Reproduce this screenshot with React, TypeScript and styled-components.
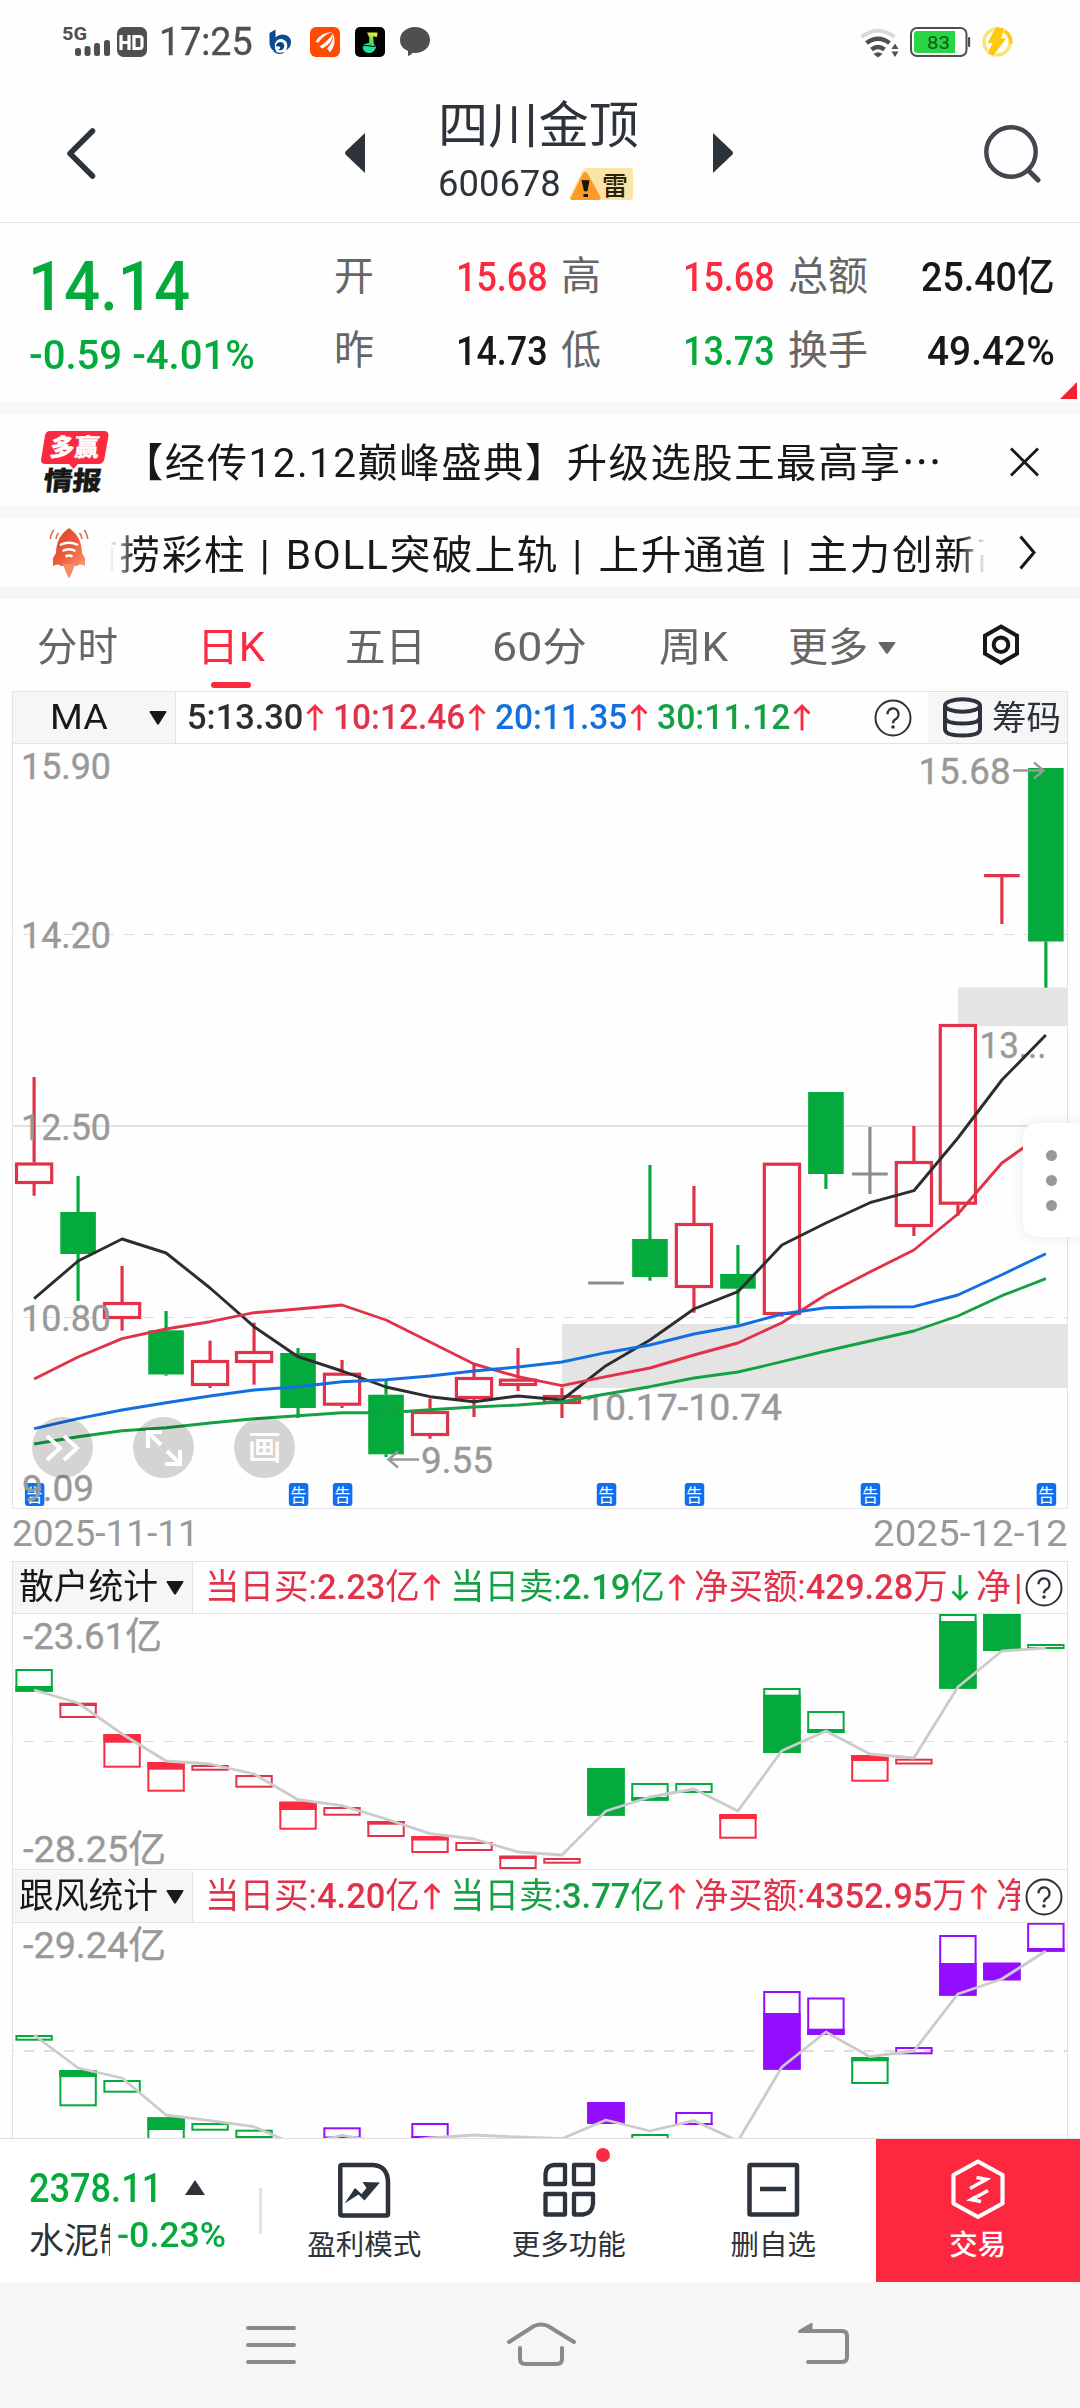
import React, { useLayoutEffect, useRef, useState } from 'react';
import styled, { createGlobalStyle } from 'styled-components';

const RED = '#fb2a40';
const LINE_RED = '#e23249';
const GREEN = '#05aa3d';
const BLUE = '#136fe0';
const PURPLE = '#930dff';
const INK = '#2d333b';
const GREY = '#999999';
const RULE = '#e3e3e3';
const BAND = '#f6f6f6';

const Global = createGlobalStyle`
  * { box-sizing: border-box; }
  body { margin: 0; background: #fff; }
  svg { display: block; flex: none; }
  svg text { font-family: Roboto, "Noto Sans CJK SC", sans-serif; }
`;

const Screen = styled.div`
  width: 1080px;
  height: 2408px;
  display: flex;
  flex-direction: column;
  overflow: hidden;
  background: #fefefe;
  color: #181818;
  font-family: Roboto, 'Noto Sans CJK SC', sans-serif;
  white-space: nowrap;
`;

/* ---------- text squeezed or stretched to a fixed measure ---------- */
const FitBox = styled.span<{ $w: number }>`
  display: inline-block;
  flex: none;
  width: ${(p) => p.$w}px;
`;
const FitInner = styled.span`
  display: inline-block;
  white-space: pre;
  transform-origin: 0 50%;
`;
function Fit({ w, children }: { w: number; children: React.ReactNode }) {
  const ref = useRef<HTMLSpanElement>(null);
  const [k, setK] = useState(1);
  useLayoutEffect(() => {
    if (ref.current) setK(w / ref.current.offsetWidth);
  }, [w]);
  return (
    <FitBox $w={w}>
      <FitInner ref={ref} style={{ transform: `scaleX(${k})` }}>{children}</FitInner>
    </FitBox>
  );
}

/* ---------- status bar ---------- */
const StatusBar = styled.div`
  height: 84px;
  flex: none;
  display: flex;
  align-items: center;
  padding: 0 67px 0 62px;
`;
const Clock = styled.div`
  margin: 0 15px 0 11px;
  font-size: 38px;
  line-height: 44px;
  color: #4f4f4f;
  -webkit-text-stroke: 0.4px #4f4f4f;
`;
const AppIcons = styled.div`
  display: flex;
  align-items: center;
  gap: 15px;
  flex: 1;
`;

/* ---------- header ---------- */
const Header = styled.div`
  height: 139px;
  flex: none;
  display: flex;
  align-items: center;
  justify-content: space-between;
  padding: 0 39px 0 66px;
  border-bottom: 1px solid ${RULE};
`;
const TitleGroup = styled.div`
  display: flex;
  align-items: center;
  gap: 72px;
  margin-left: -3px;
`;
const Title = styled.div`
  width: 202px;
  display: flex;
  flex-direction: column;
  color: ${INK};
`;
const StockName = styled.div`
  font-size: 50px;
  line-height: 58px;
  margin-top: -6px;
`;
const CodeRow = styled.div`
  display: flex;
  align-items: center;
  gap: 8px;
  font-size: 37px;
  line-height: 38px;
  margin-top: 10px;
`;

/* ---------- quote ---------- */
const Quote = styled.div`
  height: 179px;
  flex: none;
  display: flex;
  padding: 17px 25px 0 28px;
  position: relative;
`;
const PriceBlock = styled.div`
  width: 306px;
  color: ${GREEN};
`;
const Price = styled.div`
  font-size: 69px;
  font-weight: 500;
  line-height: 94px;
`;
const Change = styled.div`
  font-size: 41px;
  font-weight: 500;
  line-height: 42px;
  padding-left: 1px;
`;
const Stats = styled.div`
  flex: 1;
  display: grid;
  grid-template-columns: 42px 172px 55px 172px 95px 1fr;
  grid-auto-rows: 74px;
  align-items: center;
`;
const StatLabel = styled.div<{ $pad?: boolean }>`
  padding-left: ${(p) => (p.$pad ? 13 : 0)}px;
  font-size: 40px;
  line-height: 48px;
  color: #666;
`;
const StatValue = styled.div<{ $c?: string }>`
  text-align: right;
  font-size: 41px;
  font-weight: 500;
  line-height: 48px;
  color: ${(p) => p.$c || '#181818'};
`;
const Corner = styled.div`
  position: absolute;
  right: 3px;
  bottom: 3px;
  border-left: 17px solid transparent;
  border-bottom: 17px solid #f4222f;
`;

const Band = styled.div`
  height: 12px;
  flex: none;
  background: ${BAND};
`;

/* ---------- notices ---------- */
const News = styled.div`
  height: 92px;
  flex: none;
  display: flex;
  align-items: center;
  justify-content: space-between;
  padding: 3px 41px 0 41px;
`;
const NewsText = styled.div`
  flex: 1;
  margin-left: 14px;
  font-size: 40px;
  line-height: 48px;
  letter-spacing: 1.5px;
`;
const Dots = styled.span`
  font-family: 'Noto Sans CJK SC', sans-serif;
`;
const Ticker = styled.div`
  height: 69px;
  flex: none;
  display: flex;
  align-items: center;
  padding: 0 44px 0 48px;
  justify-content: space-between;
`;
const TickerView = styled.div`
  width: 876px;
  height: 60px;
  margin: 6px 34px 0 19px;
  overflow: hidden;
  font-size: 40px;
  line-height: 60px;
  letter-spacing: 1.7px;
  mask-image: linear-gradient(90deg, transparent 0, #000 24px, #000 850px, transparent 876px);
`;
const TickerRun = styled.div`
  margin-left: -33px;
`;
const Wide = styled.span`
  letter-spacing: 3px;
`;

/* ---------- period tabs ---------- */
const Tabs = styled.div`
  height: 92px;
  flex: none;
  display: flex;
`;
const Tab = styled.div<{ $on?: boolean; $pull?: number }>`
  width: 154px;
  display: flex;
  flex-direction: column;
  align-items: center;
  padding: 24px ${(p) => p.$pull || 0}px 0 0;
  font-size: 40px;
  line-height: 50px;
  color: ${(p) => (p.$on ? RED : '#666')};
`;
const TabLine = styled.span`
  display: flex;
  align-items: center;
  gap: 10px;
`;
const TabMark = styled.span`
  width: 40px;
  height: 6px;
  margin-top: 9px;
  border-radius: 3px;
  background: ${RED};
`;
const TabTool = styled.div`
  flex: 1;
  display: flex;
  padding: 24px 0 0 58px;
`;

/* ---------- chart panels ---------- */
const Panel = styled.div<{ $h: number }>`
  width: 1056px;
  height: ${(p) => p.$h}px;
  margin-left: 12px;
  flex: none;
  overflow: hidden;
  border: 1px solid ${RULE};
  border-bottom: 0;
`;
const PanelHead = styled.div<{ $tall?: boolean }>`
  height: ${(p) => (p.$tall ? 53 : 52)}px;
  padding-top: ${(p) => (p.$tall ? 1 : 0)}px;
  display: flex;
  align-items: center;
  border-bottom: 1px solid ${RULE};
  font-size: 35px;
  line-height: 50px;
`;
const Picker = styled.div<{ $w: number; $l: number }>`
  width: ${(p) => p.$w}px;
  height: 51px;
  flex: none;
  display: flex;
  align-items: center;
  justify-content: space-between;
  padding: 0 8px 0 ${(p) => p.$l}px;
  background: ${BAND};
  border-right: 1px solid ${RULE};
`;
const Readout = styled.div<{ $l: number; $w: number }>`
  margin-left: ${(p) => p.$l}px;
  width: ${(p) => p.$w}px;
  height: 50px;
  flex: none;
  display: flex;
  align-items: center;
  overflow: hidden;
`;
const Item = styled.span<{ $c: string; $gap: number; $bold?: boolean }>`
  display: flex;
  align-items: center;
  gap: 3px;
  flex: none;
  margin-right: ${(p) => p.$gap}px;
  color: ${(p) => p.$c};
  font-weight: ${(p) => (p.$bold ? 500 : 400)};
`;
const Strong = styled.span`
  font-weight: 500;
`;
const HelpSlot = styled.div<{ $l: number }>`
  margin-left: ${(p) => p.$l}px;
`;
const ChipButton = styled.div`
  width: 139px;
  height: 50px;
  margin-left: auto;
  display: flex;
  align-items: center;
  gap: 9px;
  padding-left: 14px;
  background: ${BAND};
  color: ${INK};
  font-size: 34px;
`;
const ChartArea = styled.div`
  position: relative;
  margin-left: -13px;
`;
const ChartWrap = styled.div`
  position: relative;
  flex: none;
`;
const RoundTools = styled.div`
  position: absolute;
  left: 32px;
  bottom: 30px;
  display: flex;
  gap: 40px;
`;
const RoundTool = styled.div`
  width: 61px;
  height: 61px;
  border-radius: 50%;
  display: flex;
  align-items: center;
  justify-content: center;
  background: rgba(0, 0, 0, 0.165);
  color: #fff;
  font-size: 34px;
  font-weight: 500;
  line-height: 60px;
`;
const SideHandle = styled.div`
  position: absolute;
  right: 0;
  top: 432px;
  width: 57px;
  height: 114px;
  border-radius: 14px 0 0 14px;
  background: #fff;
  box-shadow: 0 0 14px rgba(0, 0, 0, 0.09);
  display: flex;
  flex-direction: column;
  align-items: center;
  justify-content: center;
  gap: 14px;
`;
const HandleDot = styled.span`
  width: 11px;
  height: 11px;
  border-radius: 50%;
  background: #999;
`;
const Dates = styled.div`
  height: 53px;
  flex: none;
  display: flex;
  justify-content: space-between;
  padding: 0 12px 0 12px;
  border-top: 1px solid transparent;
  background: linear-gradient(${RULE}, ${RULE}) 12px 0 / 1056px 1px no-repeat border-box;
  font-size: 37px;
  line-height: 49px;
  color: ${GREY};
`;

/* ---------- bottom bar ---------- */
const BottomBar = styled.div`
  height: 144px;
  flex: none;
  display: flex;
  border-top: 1px solid #dedede;
  background: #fff;
`;
const IndexBox = styled.div`
  width: 262px;
  display: flex;
  align-items: center;
  justify-content: space-between;
`;
const IndexInfo = styled.div`
  padding-left: 29px;
  color: ${GREEN};
  font-weight: 500;
`;
const IndexRow = styled.div`
  height: 50px;
  display: flex;
  align-items: center;
  gap: 23px;
  font-size: 41px;
`;
const SectorRow = styled.div`
  height: 46px;
  display: flex;
  align-items: center;
  gap: 7px;
  font-size: 35px;
`;
const Sector = styled.span`
  width: 81px;
  overflow: hidden;
  color: ${INK};
  font-weight: 400;
  line-height: 46px;
  margin-top: 12px;
`;
const Divider = styled.div`
  width: 3px;
  height: 46px;
  background: #e4e4e4;
`;
const Action = styled.div<{ $hot?: boolean }>`
  flex: 1;
  display: flex;
  flex-direction: column;
  align-items: center;
  padding-top: 18px;
  background: ${(p) => (p.$hot ? '#fd273f' : 'transparent')};
  color: ${(p) => (p.$hot ? '#fff' : INK)};
  font-size: 28.5px;
  font-weight: ${(p) => (p.$hot ? 500 : 400)};
  line-height: 40px;
`;
const ActionIcon = styled.div`
  position: relative;
  margin-bottom: 23px;
  height: 46px;
`;
const RedDot = styled.span`
  position: absolute;
  left: 54px;
  top: -9px;
  width: 14px;
  height: 14px;
  border-radius: 50%;
  background: ${RED};
`;
const NavBar = styled.div`
  height: 126px;
  flex: none;
  display: grid;
  grid-template-columns: 262px 292px 56px;
  align-content: start;
  padding: 36px 0 0 243px;
  background: ${BAND};
`;

/* ---------- icons ---------- */
const Arrow = ({ c, down }: { c: string; down?: boolean }) => (
  <svg width="18" height="27" viewBox="0 0 18 27" fill="none" stroke={c} strokeWidth="2.8">
    {down ? <path d="M9 1v24M1.5 17.5 9 25l7.5-7.5" /> : <path d="M9 26.5V2M1.5 9.500 9 2l7.5 7.500" />}
  </svg>
);
const Caret = ({ w = 18, h = 14, c = '#181818' }: { w?: number; h?: number; c?: string }) => (
  <svg width={w} height={h} viewBox="0 0 18 14" preserveAspectRatio="none">
    <path d="M1.500 0h15q1.500 0 .7 1.400L10 13q-1 1.500-2 0L.8 1.400Q0 0 1.500 0Z" fill={c} />
  </svg>
);
const Help = () => (
  <svg width="38" height="38" viewBox="0 0 38 38" fill="none" stroke={INK} strokeWidth="2">
    <circle cx="19" cy="19" r="17.500" />
    <path d="M13.500 15.200a5.500 5.700 0 1 1 8 5c-1.800 1-2.500 2-2.500 4" strokeWidth="2.400" />
    <circle cx="19" cy="28" r="1.800" fill={INK} stroke="none" />
  </svg>
);
const Signal = () => (
  <svg width="51" height="38" viewBox="62 23 51 38" fill="#4f4f4f">
    <text x="62" y="39.500" fontSize="18.500" fontWeight="700" textLength="25" lengthAdjust="spacingAndGlyphs">5G</text>
    <rect x="75" y="48" width="6" height="8" rx="2.500" />
    <rect x="84.500" y="46" width="6" height="10" rx="2.500" />
    <rect x="94" y="43" width="6" height="13" rx="2.500" />
    <rect x="104" y="40" width="6" height="16" rx="2.500" />
  </svg>
);
const HdMark = styled.svg`
  margin-left: 4px;
`;
const Hd = () => (
  <HdMark width="31" height="30" viewBox="0 0 31 30">
    <rect width="30" height="30" rx="6.500" fill="#4f4f4f" />
    <path d="M4 8v15M12 8v15M4 15.500h8M17 9.500h5.500q2.500 0 2.500 2.500v7q0 2.500-2.500 2.500H17Z" fill="none" stroke="#fff" strokeWidth="3.200" />
  </HdMark>
);
const StatusApps = () => (
  <AppIcons>
    <svg width="27" height="30" viewBox="0 0 27 30">
      <path d="M1.500 6 7.500 2.500v8q2-2.700 6.500-3Q22.500 7.500 23 15q0 5.500-5 8.500 2-3.500 1-7-1.500-4.500-6.500-4.500-4.500.5-5.700 5.500-.5 4 2 8-7.300-3-7.300-9.500Z" fill="#0c4a93" />
      <path d="M8 19.500q0-4 4-4.500 4 0 4.300 4-.3 4-4 4.300-1.300 0-2-.8 2-.5 2-2.300-1.500-1.500-4.300-.7Z" fill="#0c3f86" />
      <path d="M6 24q4 4 9.500 1.500" stroke="#0c4a93" strokeWidth="1.200" fill="none" />
    </svg>
    <svg width="30" height="30" viewBox="0 0 30 30">
      <rect width="30" height="30" rx="6" fill="#fd4a04" />
      <g fill="#fff">
        <path d="M5.500 15Q10 5.500 22.500 5 12.500 8.500 8.500 15.500Z" />
        <path d="M9.500 19.500Q18.500 14 23 6q.5 9.500-10.500 15.500Z" />
        <path d="M17 21.500Q23 15.500 23.500 7q3.500 11-4 18.500-.3-2.700-2.500-4Z" />
      </g>
    </svg>
    <svg width="30" height="30" viewBox="0 0 30 30">
      <defs>
        <linearGradient id="note" x1="0.600" y1="0" x2="0.400" y2="1">
          <stop offset="0" stopColor="#f4e93a" />
          <stop offset=".5" stopColor="#2fe35c" />
          <stop offset="1" stopColor="#1fe0c8" />
        </linearGradient>
      </defs>
      <rect width="30" height="30" rx="5" fill="#020202" />
      <path d="M12 5.500h10.500l-.5 4.500-4-.5 1 8q3 1.500 1.500 4-2 4.500-6.500 4.500-6 0-6.500-6.500.5-3 6.500-3.500l.5-5Z" fill="url(#note)" />
      <path d="M6 19.500q5-2 9-.5t8-1" stroke="#020202" strokeWidth="1" fill="none" />
    </svg>
    <svg width="30" height="30" viewBox="0 0 30 30">
      <path d="M15 0c8.500 0 15 5.500 15 13S23.500 26 15 26c-.8 0-1.500 0-2.200-.2Q10.500 28.500 8 29V24Q0 20.500 0 13C0 5.500 6.500 0 15 0Z" fill="#4f4f4f" />
    </svg>
  </AppIcons>
);
const StatusRight = () => (
  <svg width="154" height="32" viewBox="861 26 154 32">
    <path d="M863.500 37q16.500-12.500 33 0" fill="none" stroke="#d9d9d9" strokeWidth="4" />
    <path d="M868.500 43q11.500-8.500 23 0M873.500 49.500q6.500-5 13 0" fill="none" stroke="#4f4f4f" strokeWidth="4.500" />
    <path d="M875.500 54q4.500-3.500 9 0l-4.500 3.500Z" fill="#4f4f4f" />
    <path d="m893.500 49 3.500-5.500 3.500 5.500ZM893.500 51.500l3.500 5.500 3.500-5.500Z" fill="#4f4f4f" />
    <rect x="913" y="28" width="55.500" height="28" rx="6" fill="#fff" stroke="#4f4f4f" strokeWidth="2" />
    <path d="M916 34q0-3 3-3h38v22h-38q-3 0-3-3Z" fill="#28d544" />
    <rect x="970" y="37" width="2.200" height="10" rx="1" fill="#4f4f4f" />
    <text x="929" y="48.500" fontSize="18.500" fill="#12581d" textLength="23" lengthAdjust="spacingAndGlyphs">83</text>
    <circle cx="999" cy="42" r="13" fill="none" stroke="#fde27a" strokeWidth="3.500" />
    <path d="M1003.500 29.500q10.500 4 9.500 14" fill="none" stroke="#fbc90d" strokeWidth="3" />
    <path d="M997.500 26.500 1007 28l-3.500 10h5.500l-9.500 12.500-4 6-6.500-3 5-10h-5Z" fill="#fbc90d" stroke="#fff" strokeWidth=".8" />
  </svg>
);
const RiskTag = () => (
  <svg width="65" height="33" viewBox="0 0 65 33">
    <path d="M14 2q1.500-2 4-2h43q3 0 3 3v26q0 3-3 3H3q-4 0-2-4Z" fill="#fbe5a6" />
    <path d="M16 4q2 0 3 2l12.500 23q.5 3-2.500 3H3.500Q.5 31.500 2 29L13.500 6q1-2 2.500-2Z" fill="#fd9a28" />
    <path d="m12.500 12 8 .2-2 11h-3.500ZM14.500 26h4.500v3h-4.500Z" fill="#1a1205" />
    <text x="33" y="26.500" fontSize="26" fontWeight="500" fill="#2b210c" textLength="26" lengthAdjust="spacingAndGlyphs">雷</text>
  </svg>
);
const NewsLogo = () => (
  <svg width="68" height="64" viewBox="0 0 68 64">
    <path d="M9 1h54q5 0 4.400 5l-4 23q-1 5-6 5H37l-4.500 5L28 34H4.500q-5 0-4.300-5L4 5.500Q4.800 1 9 1Z" fill={RED} />
    <g transform="skewX(-6)" fontWeight="900">
      <text x="11" y="26.500" fontSize="24.500" fill="#fff" stroke="#fff" strokeWidth=".3" textLength="49" lengthAdjust="spacingAndGlyphs">多赢</text>
      <text x="8" y="60.500" fontSize="26" fill="#181818" stroke="#181818" strokeWidth=".3" textLength="58" lengthAdjust="spacingAndGlyphs">情报</text>
    </g>
  </svg>
);
const Rocket = () => (
  <svg width="43" height="52" viewBox="48 526 43 52">
    <defs>
      <linearGradient id="hull" x1="0" y1="0" x2="1" y2="1">
        <stop offset="0" stopColor="#d8402c" />
        <stop offset=".55" stopColor="#ee5c3c" />
        <stop offset="1" stopColor="#fb9a6c" />
      </linearGradient>
    </defs>
    <path d="M69 527q13 9 13 25l3 5v8q-5-3-8 0H61q-3-3-8 0v-8l3-5q0-16 13-25Z" fill="url(#hull)" />
    <path d="M63 563h12l-3.500 9.500-2.500 5-2.500-5Z" fill="#f98a62" />
    <path d="M60 544q9-4.500 18 0M62.500 550q6.500-3.500 13 0M65.500 555.500q3.500-2 7 0" fill="none" stroke="#fff" strokeWidth="2.400" />
    <path d="M54 529q-3 3-3.800 9M58.500 532q-2 2-2.500 6M84 529q3 3 3.800 9M79.500 532q2 2 2.500 6" fill="none" stroke="#d8604a" strokeWidth="1.500" />
  </svg>
);
const HexNut = () => (
  <svg width="38" height="44" viewBox="0 0 38 44" fill="none" stroke="#181818">
    <path d="M19 3.500 35 12.700v18L19 40 3 30.700v-18Z" strokeWidth="4" />
    <circle cx="19" cy="21.700" r="7.300" strokeWidth="4" />
  </svg>
);
const Stack = () => (
  <svg width="41" height="41" viewBox="0 0 41 41" fill="none" stroke={INK} strokeWidth="4">
    <ellipse cx="20.500" cy="8.500" rx="17.500" ry="6.300" />
    <path d="M3 8.500V32q0 6.500 17.500 6.500T38 32V8.500M3 20q0 6.500 17.500 6.500T38 20" />
  </svg>
);

/* ---------- chart geometry ---------- */
const colX = (i: number) => 34.1 + 43.99 * i;
const toPoints = (ys: number[]) => ys.map((y, i) => `${colX(i)},${y}`).join(' ');

type Candle = [kind: 'r' | 'g' | 'n', high: number, top: number, bottom: number, low: number];
const candles: Candle[] = [
  ['r', 1077, 1162.5, 1184, 1195.7], ['g', 1176, 1212, 1254, 1301], ['r', 1266, 1302, 1319, 1330.7],
  ['g', 1311, 1330.3, 1374.5, 1375.7], ['r', 1340.7, 1360, 1386, 1388], ['r', 1322.7, 1351, 1363, 1384.7],
  ['g', 1348, 1353, 1408, 1418], ['r', 1360, 1372.7, 1405.7, 1408], ['g', 1380, 1394.7, 1454.3, 1457],
  ['r', 1398.7, 1411, 1436, 1438.7], ['r', 1364, 1377, 1399, 1417], ['r', 1348, 1378.7, 1386, 1391],
  ['r', 1387.7, 1395, 1404, 1418], ['n', 1283, 1283, 1283, 1283], ['g', 1165, 1239, 1277, 1280.7],
  ['r', 1186, 1223, 1288, 1312.7], ['g', 1245, 1274, 1288.7, 1324], ['r', 1163, 1162.7, 1315, 1316.7],
  ['g', 1092, 1092, 1174, 1189], ['n', 1127, 1174, 1174, 1194], ['r', 1126, 1161, 1227, 1236],
  ['r', 1025, 1024, 1204.7, 1215.7], ['r', 875, 875.7, 875.7, 924], ['g', 768, 768, 941.5, 987.7],
];
const ma5 = [1298.7, 1261, 1239, 1253, 1288, 1326.7, 1356.7, 1371, 1387, 1396.7, 1401.7, 1396, 1400, 1365.7, 1340, 1309, 1291.7, 1245, 1223, 1202.7, 1190.7, 1138, 1080, 1035];
const ma10 = [1379, 1357, 1338.7, 1329, 1321.7, 1312.7, 1309, 1305, 1320, 1342, 1364, 1376.7, 1385.7, 1376.7, 1368, 1355, 1343, 1322.7, 1294.7, 1272, 1250, 1214, 1163, 1132];
const ma20 = [1428.7, 1418.7, 1410, 1402.7, 1396, 1390, 1386.7, 1381.7, 1379.7, 1376, 1371, 1367, 1362, 1352.7, 1345, 1334, 1326, 1314, 1307.7, 1307, 1306.7, 1295, 1274.7, 1253.7];
const ma30 = [1444, 1436.7, 1430.7, 1427.7, 1423, 1418.7, 1415.7, 1412.7, 1412.7, 1409.7, 1407, 1405, 1401.7, 1394, 1386.7, 1378, 1372, 1361.7, 1351, 1341, 1331, 1316, 1295.7, 1278.7];

const CandleMark = ({ c, i }: { c: Candle; i: number }) => {
  const [kind, high, top, bottom, low] = c;
  const x = colX(i);
  const color = kind === 'r' ? LINE_RED : kind === 'g' ? GREEN : '#8c8c8c';
  const flat = top === bottom;
  return (
    <g stroke={color} strokeWidth="3.200" fill="none">
      {high < top && <line x1={x} x2={x} y1={high} y2={top} />}
      {low > bottom && <line x1={x} x2={x} y1={bottom} y2={low} />}
      {flat && <line x1={x - 17.8} x2={x + 17.8} y1={top} y2={top} />}
      {!flat && kind === 'r' && <rect x={x - 17.6} y={top + 1.5} width="35.200" height={bottom - top - 3} />}
      {!flat && kind === 'g' && <rect x={x - 17.8} y={top} width="35.600" height={bottom - top} fill={GREEN} stroke="none" />}
    </g>
  );
};

const Label = ({ x, y, w, children }: { x: number; y: number; w: number; children: string }) => (
  <text x={x} y={y} fontSize="37.500" fill={GREY} stroke={GREY} strokeWidth=".4" textLength={w} lengthAdjust="spacingAndGlyphs">{children}</text>
);
const Dash = ({ y, sw = 1 }: { y: number; sw?: number }) => (
  <line x1="13" x2="1067" y1={y} y2={y} stroke="#dedede" strokeWidth={sw} strokeDasharray="10 10" strokeDashoffset="9" />
);

const MainChart = () => (
  <svg width="1080" height="764" viewBox="0 744 1080 764">
    <Dash y={934.5} />
    <line x1="13" x2="1067" y1="1126" y2="1126" stroke={RULE} strokeWidth="2" />
    <Dash y={1317.5} />
    <rect x="958" y="987.500" width="109" height="38.500" fill="#e4e4e4" />
    <rect x="562" y="1324" width="505" height="64" fill="#e4e4e4" />
    {candles.map((c, i) => <CandleMark key={i} c={c} i={i} />)}
    <g fill="none" strokeWidth="2.900" strokeLinejoin="round">
      <Label x={584} y={1419.5} w={198}>10.17-10.74</Label>
      <Label x={979.5} y={1057.5} w={67}>13...</Label>
      <polyline points={toPoints(ma5)} stroke="#2b2d30" />
      <polyline points={toPoints(ma10)} stroke={LINE_RED} />
      <polyline points={toPoints(ma20)} stroke={BLUE} />
      <polyline points={toPoints(ma30)} stroke="#15a043" />
    </g>
    {[0, 6, 7, 13, 15, 19, 23].map((i) => (
      <g key={i}>
        <rect x={colX(i) - 9.2} y="1483" width="19.500" height="23" rx="3" fill="#0f6ff0" />
        <text x={colX(i) - 7.6} y="1501.500" fontSize="18" fill="#fff" textLength="16" lengthAdjust="spacingAndGlyphs">告</text>
      </g>
    ))}
    <Label x={21} y={779} w={90}>15.90</Label>
    <Label x={21} y={948} w={90}>14.20</Label>
    <Label x={21} y={1139.5} w={90}>12.50</Label>
    <Label x={21} y={1331} w={90}>10.80</Label>
    <Label x={22} y={1500.5} w={72}>9.09</Label>
    <Label x={918.5} y={783.7} w={92}>15.68</Label>
    <Label x={421} y={1472.7} w={72}>9.55</Label>
    <g fill="none" stroke={GREY} strokeWidth="2.400">
      <path d="M1013 770.500h30M1034 762.500l9.500 8-9.500 8" />
      <path d="M419 1459.500h-30M398 1451.500l-9.500 8 9.500 8" />
    </g>
  </svg>
);

/* colour, top, bottom, solid part from..to */
type Bar = [i: number, color: string, top: number, bottom: number, from?: number, to?: number];
const retail: Bar[] = [
  [0, GREEN, 1669, 1691.7, 1686, 1691.7], [1, LINE_RED, 1702.7, 1718, 1703, 1706], [2, RED, 1734, 1767.7, 1734, 1742.7],
  [3, RED, 1762, 1791.7, 1762, 1769.7], [4, LINE_RED, 1765, 1770.7], [5, LINE_RED, 1775, 1787.7],
  [6, RED, 1801.7, 1829.7, 1801.7, 1810], [7, LINE_RED, 1807, 1815.7], [8, LINE_RED, 1821, 1837, 1821, 1824.7],
  [9, RED, 1836, 1853, 1836, 1840.5], [10, LINE_RED, 1842, 1851], [11, LINE_RED, 1855.7, 1869, 1855.7, 1859],
  [12, LINE_RED, 1858, 1863.7], [13, GREEN, 1768, 1815.7, 1768, 1815.7], [14, GREEN, 1783, 1800.7, 1797, 1800.7],
  [15, GREEN, 1783, 1793], [16, RED, 1814, 1838.7, 1814, 1819], [17, GREEN, 1688, 1753, 1694.7, 1753],
  [18, GREEN, 1711, 1733, 1729, 1733], [19, RED, 1755, 1781.7, 1755, 1761], [20, LINE_RED, 1758.7, 1764.5],
  [21, GREEN, 1614, 1688.7, 1621, 1688.7], [22, GREEN, 1613, 1651, 1613, 1651], [23, GREEN, 1644, 1649],
];
const retailLine = [1690, 1703, 1734, 1761, 1764, 1774, 1799.7, 1805.7, 1819, 1833.7, 1839, 1852, 1855, 1811, 1797, 1789, 1811, 1750.7, 1731, 1754, 1758, 1687, 1651, 1648];
const follow: Bar[] = [
  [0, GREEN, 2035, 2040.7], [1, GREEN, 2070, 2106.3, 2070, 2077], [2, GREEN, 2080, 2092.7], [3, GREEN, 2117.3, 2152, 2117.3, 2130],
  [4, GREEN, 2123, 2130.7], [5, GREEN, 2129.7, 2138], [7, PURPLE, 2127.3, 2138.5], [9, PURPLE, 2123, 2141, 2136, 2141],
  [13, PURPLE, 2102, 2124, 2102, 2124], [14, GREEN, 2134, 2144], [15, PURPLE, 2112, 2125, 2123, 2125],
  [17, PURPLE, 1991, 2069.7, 2013, 2069.7], [18, PURPLE, 1997.5, 2035, 2028.7, 2035], [19, GREEN, 2057, 2084, 2057, 2061.3],
  [20, PURPLE, 2047, 2054.3], [21, PURPLE, 1935, 1995.7, 1963, 1995.7], [22, PURPLE, 1962.7, 1980.3, 1962.7, 1980.3],
  [23, PURPLE, 1922.7, 1951.7, 1948, 1951.7],
];
const followLine = [2035, 2068, 2078, 2115, 2120.7, 2126.7, 2146, 2135.3, 2143, 2138, 2135, 2137, 2138.7, 2120, 2131, 2120.7, 2141, 2067, 2032, 2056.7, 2051, 1994, 1979, 1951];

const BarMark = ({ b }: { b: Bar }) => {
  const [i, color, top, bottom, from, to] = b;
  const x = colX(i);
  return (
    <g>
      <rect x={x - 17.7} y={top + 1} width="35.400" height={bottom - top - 2} fill="none" stroke={color} strokeWidth="2" />
      {from !== undefined && to !== undefined && <rect x={x - 18.7} y={from} width="37.400" height={to - from} fill={color} />}
    </g>
  );
};
const Trend = ({ ys }: { ys: number[] }) => (
  <polyline points={toPoints(ys)} fill="none" stroke="#cbcbcb" strokeWidth="2.800" strokeLinejoin="round" />
);

const MaValue = ({ c, w, gap, children }: { c: string; w: number; gap: number; children: string }) => (
  <Item $c={c} $gap={gap} $bold>
    <Fit w={w}>{children}</Fit>
    <Arrow c={RED} />
  </Item>
);
const Flow = ({ c, head, num, unit, w, down, gap }: { c: string; head: string; num: string; unit: string; w: number; down?: boolean; gap: number }) => (
  <Item $c={c} $gap={gap}>
    <Fit w={w}>{head}<Strong>{num}</Strong>{unit}</Fit>
    <Arrow c={down ? GREEN : RED} down={down} />
  </Item>
);

export default function App() {
  return (
    <Screen>
      <Global />
      <StatusBar>
        <Signal />
        <Hd />
        <Clock><Fit w={94}>17:25</Fit></Clock>
        <StatusApps />
        <StatusRight />
      </StatusBar>

      <Header>
        <svg width="31" height="54" viewBox="0 0 31 54" fill="none" stroke={INK} strokeWidth="5.500" strokeLinecap="round" strokeLinejoin="round">
          <path d="M26.500 5 4 27.500 26.500 50" />
        </svg>
        <TitleGroup>
          <svg width="22" height="42" viewBox="0 0 22 42"><path d="M21 1v40L2 23q-2-2 0-4Z" fill={INK} /></svg>
          <Title>
            <StockName><Fit w={201}>四川金顶</Fit></StockName>
            <CodeRow><Fit w={123}>600678</Fit><RiskTag /></CodeRow>
          </Title>
          <svg width="22" height="42" viewBox="0 0 22 42"><path d="M1 1v40l19-18q2-2 0-4Z" fill={INK} /></svg>
        </TitleGroup>
        <svg width="58" height="60" viewBox="0 0 58 60" fill="none" stroke="#44464f" strokeWidth="4.500" strokeLinecap="round">
          <circle cx="28" cy="29" r="24.700" />
          <path d="m46 48 9 9" strokeWidth="5" />
        </svg>
      </Header>

      <Quote>
        <PriceBlock>
          <Price><Fit w={162}>14.14</Fit></Price>
          <Change><Fit w={226}>-0.59 -4.01%</Fit></Change>
        </PriceBlock>
        <Stats>
          <StatLabel>开</StatLabel><StatValue $c={RED}><Fit w={92}>15.68</Fit></StatValue>
          <StatLabel $pad>高</StatLabel><StatValue $c={RED}><Fit w={92}>15.68</Fit></StatValue>
          <StatLabel $pad>总额</StatLabel><StatValue><Fit w={134}>25.40亿</Fit></StatValue>
          <StatLabel>昨</StatLabel><StatValue><Fit w={92}>14.73</Fit></StatValue>
          <StatLabel $pad>低</StatLabel><StatValue $c={GREEN}><Fit w={92}>13.73</Fit></StatValue>
          <StatLabel $pad>换手</StatLabel><StatValue><Fit w={128}>49.42%</Fit></StatValue>
        </Stats>
        <Corner />
      </Quote>
      <Band />
      <News>
        <NewsLogo />
        <NewsText><Fit w={820}>【经传12.12巅峰盛典】升级选股王最高享<Dots>…</Dots></Fit></NewsText>
        <svg width="29" height="30" viewBox="0 0 29 30" stroke="#181818" strokeWidth="2.800"><path d="m1 1.500 27 27M28 1.500l-27 27" /></svg>
      </News>
      <Band />
      <Ticker>
        <Rocket />
        <TickerView>
          <TickerRun>
            <Fit w={942}>前捞彩柱<Wide> | </Wide>BOLL突破上轨<Wide> | </Wide>上升通道<Wide> | </Wide>主力创新高</Fit>
          </TickerRun>
        </TickerView>
        <svg width="17" height="35" viewBox="0 0 17 35" fill="none" stroke="#181818" strokeWidth="3"><path d="m1.500 1.500 13.500 16-13.500 16" /></svg>
      </Ticker>
      <Band />

      <Tabs>
        <Tab><Fit w={81}>分时</Fit></Tab>
        <Tab $on><Fit w={68}>日K</Fit><TabMark /></Tab>
        <Tab><Fit w={81}>五日</Fit></Tab>
        <Tab><Fit w={95}>60分</Fit></Tab>
        <Tab><Fit w={69}>周K</Fit></Tab>
        <Tab $pull={10}><TabLine><Fit w={80}>更多</Fit><Caret h={12} c="#666" /></TabLine></Tab>
        <TabTool><HexNut /></TabTool>
      </Tabs>

      <ChartWrap>
        <Panel $h={817}>
          <PanelHead>
            <Picker $w={163} $l={37}><Fit w={58}>MA</Fit><Caret /></Picker>
            <Readout $l={11} $w={626}>
              <MaValue c="#2b2d30" w={116} gap={9}>5:13.30</MaValue>
              <MaValue c={LINE_RED} w={132} gap={9}>10:12.46</MaValue>
              <MaValue c={BLUE} w={132} gap={9}>20:11.35</MaValue>
              <MaValue c="#15a043" w={133} gap={0}>30:11.12</MaValue>
            </Readout>
            <HelpSlot $l={61}><Help /></HelpSlot>
            <ChipButton><Stack /><Fit w={69}>筹码</Fit></ChipButton>
          </PanelHead>
          <ChartArea><MainChart /></ChartArea>
        </Panel>
        <RoundTools>
          <RoundTool>
            <svg width="36" height="28" viewBox="0 0 36 28" fill="none" stroke="#fff" strokeWidth="4"><path d="m2 2 13 12L2 26M19 2l13 12-13 12" /></svg>
          </RoundTool>
          <RoundTool>
            <svg width="40" height="40" viewBox="0 0 40 40" fill="none" stroke="#fff" strokeWidth="4"><path d="M4 20V4h14M4 4l13 13M36 22v14H21M36 36 23 23" /></svg>
          </RoundTool>
          <RoundTool>画</RoundTool>
        </RoundTools>
        <SideHandle><HandleDot /><HandleDot /><HandleDot /></SideHandle>
      </ChartWrap>
      <Dates><Fit w={187}>2025-11-11</Fit><Fit w={195}>2025-12-12</Fit></Dates>

      <Panel $h={308}>
        <PanelHead>
          <Picker $w={180} $l={6}><Fit w={139}>散户统计</Fit><Caret /></Picker>
          <Readout $l={12} $w={815}>
            <Flow c={LINE_RED} head="当日买:" num="2.23" unit="亿" w={215} gap={9} />
            <Flow c="#15a043" head="当日卖:" num="2.19" unit="亿" w={215} gap={8} />
            <Flow c={LINE_RED} head="净买额:" num="429.28" unit="万" w={254} gap={7} down />
            <Item $c={LINE_RED} $gap={0}>净<span>|</span></Item>
          </Readout>
          <HelpSlot $l={5}><Help /></HelpSlot>
        </PanelHead>
        <ChartArea>
          <svg width="1080" height="255" viewBox="0 1614 1080 255">
            <Label x={23} y={1649} w={139}>-23.61亿</Label>
            <Label x={23} y={1862} w={143}>-28.25亿</Label>
            <Dash y={1741.5} />
            {retail.map((b) => <BarMark key={b[0]} b={b} />)}
            <Trend ys={retailLine} />
          </svg>
        </ChartArea>
      </Panel>

      <Panel $h={269}>
        <PanelHead $tall>
          <Picker $w={180} $l={6}><Fit w={139}>跟风统计</Fit><Caret /></Picker>
          <Readout $l={12} $w={815}>
            <Flow c={LINE_RED} head="当日买:" num="4.20" unit="亿" w={215} gap={9} />
            <Flow c="#15a043" head="当日卖:" num="3.77" unit="亿" w={215} gap={8} />
            <Flow c={LINE_RED} head="净买额:" num="4352.95" unit="万" w={273} gap={8} />
            <Item $c={LINE_RED} $gap={0}>净</Item>
          </Readout>
          <HelpSlot $l={5}><Help /></HelpSlot>
        </PanelHead>
        <ChartArea>
          <svg width="1080" height="215" viewBox="0 1923 1080 215">
            <Label x={23} y={1957.5} w={143}>-29.24亿</Label>
            <Dash y={2051} sw={2} />
            {follow.map((b) => <BarMark key={b[0]} b={b} />)}
            <Trend ys={followLine} />
          </svg>
        </ChartArea>
      </Panel>

      <BottomBar>
        <IndexBox>
          <IndexInfo>
            <IndexRow>
              <Fit w={133}>2378.11</Fit>
              <svg width="20" height="15" viewBox="0 0 20 15"><path d="M10 0 20 15H0Z" fill={INK} /></svg>
            </IndexRow>
            <SectorRow>
              <Sector>水泥制品</Sector>
              <Fit w={109}>-0.23%</Fit>
            </SectorRow>
          </IndexInfo>
          <Divider />
        </IndexBox>
        <Action>
          <ActionIcon>
            <svg width="54" height="64" viewBox="0 0 54 64">
              <path d="M5 8h31q15 1 15 18v31q0 1.500-1.500 1.500H5Q3.300 58.500 3.300 57V9.500Q3.300 8 5 8Z" fill="none" stroke={INK} strokeWidth="4.500" />
              <path d="M7.500 46.500 18 31l6.500 6 5-6-4-6 17.500.5-15.500 18-6-6Z" fill={INK} />
            </svg>
          </ActionIcon>
          盈利模式
        </Action>
        <Action>
          <ActionIcon>
            <svg width="54" height="64" viewBox="0 0 54 64" fill="none" stroke={INK} strokeWidth="4.300" strokeLinejoin="round">
              <path d="M12 8h11v19H3.500V17q.5-8.500 8.500-9ZM32 8h19v19H32ZM3.500 37H23v20.500H3.500ZM32 37h19v10q-1 9.500-10 10.500h-9Z" />
            </svg>
            <RedDot />
          </ActionIcon>
          更多功能
        </Action>
        <Action>
          <ActionIcon>
            <svg width="54" height="64" viewBox="0 0 54 64" fill="none" stroke={INK} strokeWidth="4.500" strokeLinejoin="round">
              <rect x="3.500" y="8" width="47.500" height="49.500" rx="1" />
              <path d="M14 32h26" />
            </svg>
          </ActionIcon>
          删自选
        </Action>
        <Action $hot>
          <ActionIcon>
            <svg width="54" height="64" viewBox="0 0 54 64" fill="none" stroke="#fff">
              <path d="M27 4.500 51.500 18v28.500L27 60 2.500 46.500V18Z" strokeWidth="4.200" strokeLinejoin="round" />
              <path d="m19 31.500 16-9M25.500 20.500l10 1.800-5 3M37 33.500l-16 9M30 44.500l-10-1.800 5-3" strokeWidth="3.500" />
            </svg>
          </ActionIcon>
          交易
        </Action>
      </BottomBar>

      <NavBar>
        <svg width="56" height="54" viewBox="243 2318 56 54" stroke="#8a8a8a" strokeWidth="4" strokeLinecap="round">
          <path d="M248 2328h46M248 2345h46M248 2362h46" />
        </svg>
        <svg width="72" height="54" viewBox="505 2318 72 54" fill="none" stroke="#8a8a8a" strokeWidth="4" strokeLinecap="round">
          <path d="m509 2342 25-16q7-3 14 0l26 16M520 2348v11q0 5 5 5h32q5 0 5-5v-11" />
        </svg>
        <svg width="56" height="54" viewBox="797 2318 56 54" fill="none" stroke="#8a8a8a" strokeWidth="4" strokeLinecap="round">
          <path d="M803 2331h39q5 0 5 5v21q0 5-5 5h-34" />
          <path d="M799 2330.500 812 2323v9.500h-13Z" fill="#8a8a8a" strokeWidth="1" />
        </svg>
      </NavBar>
    </Screen>
  );
}
